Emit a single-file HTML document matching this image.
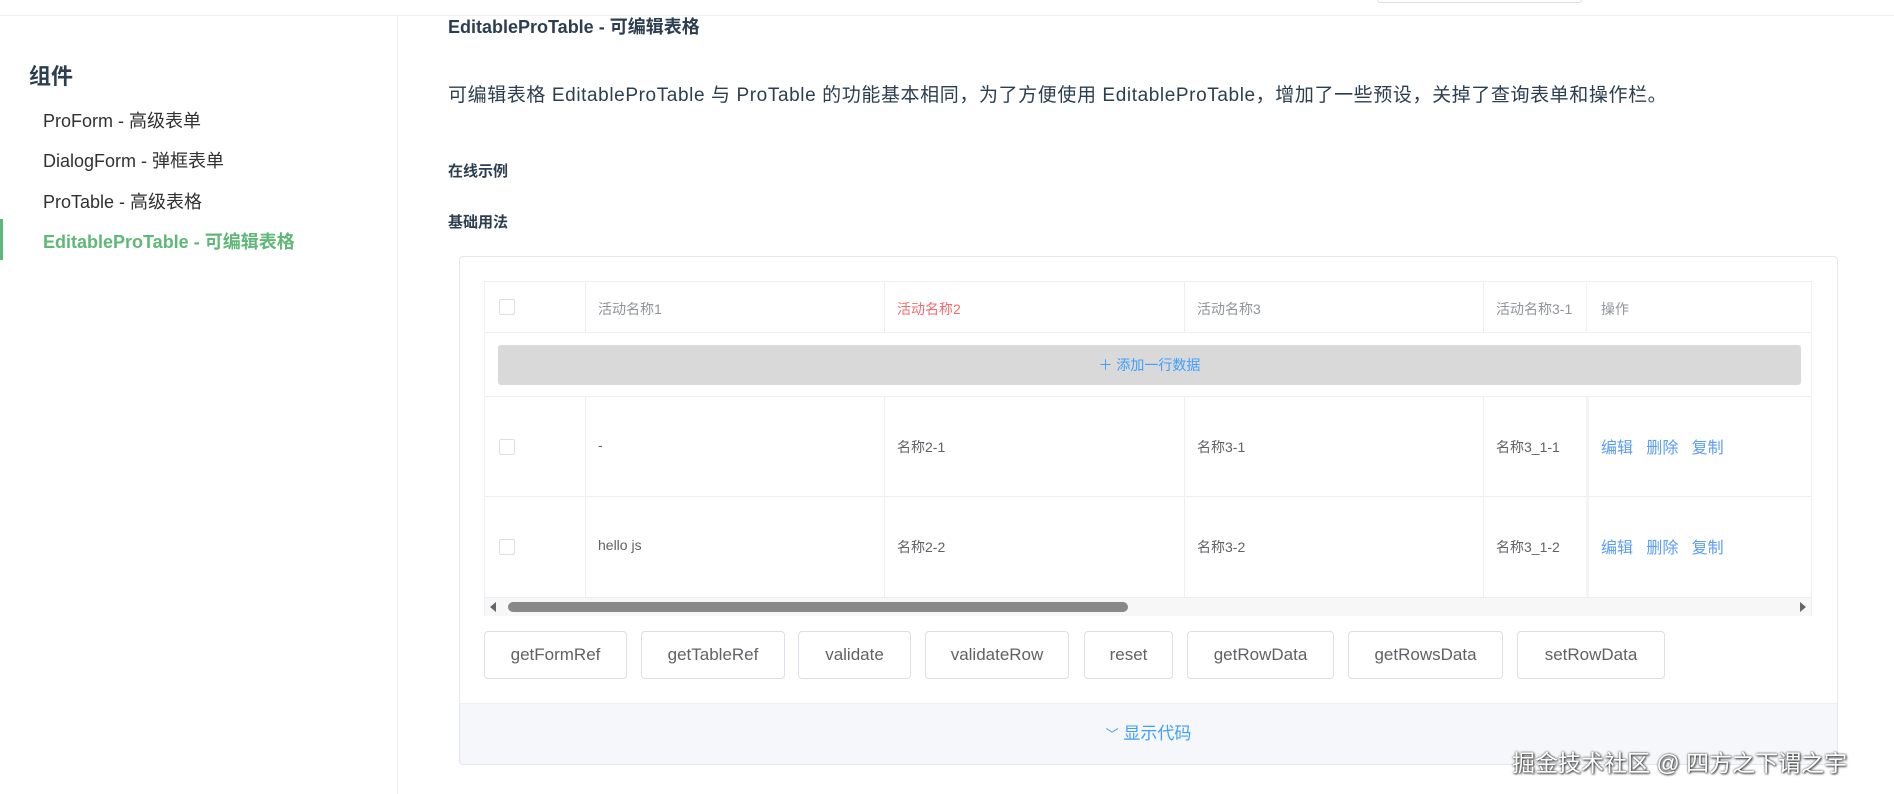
<!DOCTYPE html>
<html><head><meta charset="utf-8"><style>
*{margin:0;padding:0;box-sizing:border-box}
body{width:1894px;height:794px;overflow:hidden;background:#fff;font-family:"Liberation Sans","Noto Sans CJK SC",sans-serif;color:#333;position:relative}
.a{position:absolute;white-space:nowrap}
.topline{left:0;top:15px;width:1894px;height:1px;background:#eee}
.side{left:397px;top:16px;width:1px;height:778px;background:#eee}
.menu{font-size:18px;color:#303133;left:43px}
.h{font-weight:bold;color:#2c3e50}
.box{left:459px;top:256px;width:1379px;height:509px;border:1px solid #e4e7ed;border-radius:4px;overflow:hidden}
.foot{position:absolute;left:0;bottom:0;width:100%;height:61px;background:#f5f7fa;border-top:1px solid #eee;text-align:center;line-height:60px;color:#409eff;font-size:17px}
.tbl{left:484px;top:281px;width:1328px;height:335px;border:1px solid #ebeef5}
.hl{position:absolute;background:#ebeef5}
.cell{position:absolute;font-size:14px;color:#606266}
.cb{position:absolute;width:16px;height:16px;border:1px solid #dcdfe6;border-radius:2px;background:#fff}
.btn{position:absolute;top:631px;height:48px;border:1px solid #dcdfe6;border-radius:4px;font-size:17px;color:#606266;text-align:center;line-height:46px;background:#fff}
.lk{color:#5a9cf8;font-size:16px}
</style></head><body>
<div class="a topline"></div>
<div class="a" style="left:1377px;top:0;width:205px;height:3px;border:1px solid #ddd;border-top:none;border-radius:0 0 10px 10px"></div>
<div class="a side"></div>
<div class="a h" style="left:29px;top:59px;font-size:22px">组件</div>
<div class="a menu" style="top:107px">ProForm - 高级表单</div>
<div class="a menu" style="top:147px">DialogForm - 弹框表单</div>
<div class="a menu" style="top:188px">ProTable - 高级表格</div>
<div class="a" style="left:0;top:219px;width:3px;height:41px;background:#5fb878"></div>
<div class="a menu" style="top:228px;color:#5fb878;font-weight:bold">EditableProTable - 可编辑表格</div>
<div class="a h" style="left:448px;top:13px;font-size:18px">EditableProTable - 可编辑表格</div>
<div class="a" style="left:448px;top:80px;font-size:19px;letter-spacing:0.6px;color:#2c3e50">可编辑表格 EditableProTable 与 ProTable 的功能基本相同，为了方便使用 EditableProTable，增加了一些预设，关掉了查询表单和操作栏。</div>
<div class="a h" style="left:448px;top:160px;font-size:15px">在线示例</div>
<div class="a h" style="left:448px;top:211px;font-size:15px">基础用法</div>
<div class="a box"><div class="foot"><span style="font-size:13px">﹀</span> 显示代码</div></div>
<div class="a tbl">
 <div class="hl" style="left:0;top:50px;width:100%;height:1px"></div>
 <div class="hl" style="left:0;top:114px;width:100%;height:1px"></div>
 <div class="hl" style="left:0;top:214px;width:100%;height:1px"></div>
 <div class="hl" style="left:0;top:315px;width:100%;height:1px"></div>
 <div class="hl" style="left:100px;top:0;width:1px;height:50px"></div><div class="hl" style="left:100px;top:114px;width:1px;height:201px"></div>
 <div class="hl" style="left:399px;top:0;width:1px;height:50px"></div><div class="hl" style="left:399px;top:114px;width:1px;height:201px"></div>
 <div class="hl" style="left:699px;top:0;width:1px;height:50px"></div><div class="hl" style="left:699px;top:114px;width:1px;height:201px"></div>
 <div class="hl" style="left:998px;top:0;width:1px;height:50px"></div><div class="hl" style="left:998px;top:114px;width:1px;height:201px"></div>
 <div class="hl" style="left:1101px;top:0;width:1px;height:50px;background:#f2f2f2"></div><div class="hl" style="left:1101px;top:114px;width:3px;height:201px;background:#f4f4f4"></div>
 <div class="cb" style="left:14px;top:17px"></div>
 <div class="cell" style="left:113px;top:17px;color:#909399">活动名称1</div>
 <div class="cell" style="left:412px;top:17px;color:#f56c6c">活动名称2</div>
 <div class="cell" style="left:712px;top:17px;color:#909399">活动名称3</div>
 <div class="cell" style="left:1011px;top:17px;color:#909399">活动名称3-1</div>
 <div class="cell" style="left:1116px;top:17px;color:#909399">操作</div>
 <div style="position:absolute;left:13px;top:63px;width:1303px;height:40px;background:#d9d9d9;border-radius:3px;text-align:center;line-height:40px;color:#409eff;font-size:14px">＋ 添加一行数据</div>
 <div class="cb" style="left:14px;top:157px"></div>
 <div class="cell" style="left:113px;top:155px">-</div>
 <div class="cell" style="left:412px;top:155px">名称2-1</div>
 <div class="cell" style="left:712px;top:155px">名称3-1</div>
 <div class="cell" style="left:1011px;top:155px">名称3_1-1</div>
 <div class="cell lk" style="left:1116px;top:152px">编辑&nbsp;&nbsp;&nbsp;删除&nbsp;&nbsp;&nbsp;复制</div>
 <div class="cb" style="left:14px;top:257px"></div>
 <div class="cell" style="left:113px;top:255px">hello js</div>
 <div class="cell" style="left:412px;top:255px">名称2-2</div>
 <div class="cell" style="left:712px;top:255px">名称3-2</div>
 <div class="cell" style="left:1011px;top:255px">名称3_1-2</div>
 <div class="cell lk" style="left:1116px;top:252px">编辑&nbsp;&nbsp;&nbsp;删除&nbsp;&nbsp;&nbsp;复制</div>
 <div style="position:absolute;left:0;top:316px;width:100%;height:18px;background:#f7f7f7"></div>
 <div style="position:absolute;left:23px;top:320px;width:620px;height:10px;background:#888;border-radius:5px"></div>
 <div style="position:absolute;left:5px;top:320px;width:0;height:0;border-top:5px solid transparent;border-bottom:5px solid transparent;border-right:6px solid #666"></div>
 <div style="position:absolute;right:5px;top:320px;width:0;height:0;border-top:5px solid transparent;border-bottom:5px solid transparent;border-left:6px solid #666"></div>
</div>
<div class="btn" style="left:484px;width:143px">getFormRef</div>
<div class="btn" style="left:641px;width:144px">getTableRef</div>
<div class="btn" style="left:798px;width:113px">validate</div>
<div class="btn" style="left:925px;width:144px">validateRow</div>
<div class="btn" style="left:1084px;width:89px">reset</div>
<div class="btn" style="left:1187px;width:147px">getRowData</div>
<div class="btn" style="left:1348px;width:155px">getRowsData</div>
<div class="btn" style="left:1517px;width:148px">setRowData</div>
<div class="a" style="left:1512px;top:744px;font-size:23px;color:#fff;text-shadow:0 0 2px #333,1px 1px 2px #333">掘金技术社区 @ 四方之下谓之宇</div>
</body></html>
